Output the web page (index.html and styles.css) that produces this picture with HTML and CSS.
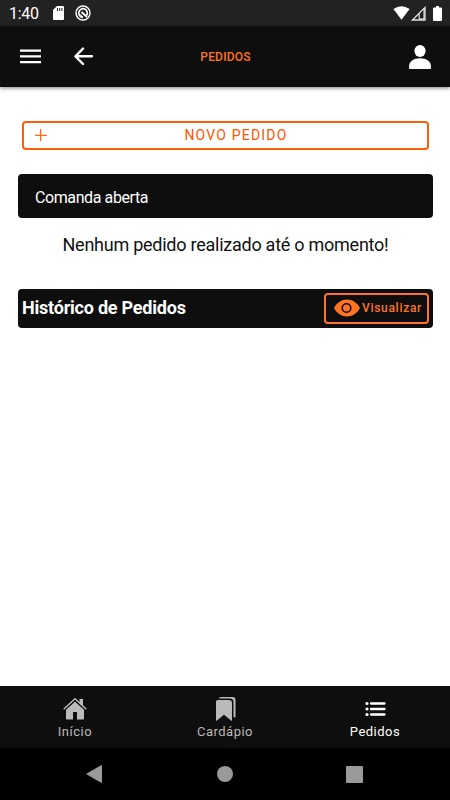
FILE: index.html
```html
<!DOCTYPE html>
<html lang="pt-BR">
<head>
<meta charset="utf-8">
<meta name="viewport" content="width=device-width, initial-scale=1">
<title>Pedidos</title>
<link rel="stylesheet" href="styles.css">
</head>
<body>
<div class="status">
  <span class="clock">1:40</span>
  <svg class="sd" width="11" height="14" viewBox="0 0 11 14"><path fill="#fff" fill-rule="evenodd" d="M4 0h6q1 0 1 1v12q0 1-1 1H1q-1 0-1-1V4zM4 2v3h1V2zM6.2 2v3h1V2zM8.4 2v3h1V2z"/></svg>
  <svg class="ring" width="16" height="16" viewBox="0 0 16 16" fill="none" stroke="#fff"><circle cx="8" cy="8" r="7" stroke-width="1.4"/><path d="M11.500 10.500A4.300 4.300 0 1 0 8 12.300" stroke-width="1.700"/><path d="M6.500 7l5.500 5" stroke-width="1.800"/><path d="M5 9.500l3 2.500" stroke-width="1"/></svg>
  <svg class="wifi" width="17" height="14" viewBox="0 0 17 14"><path fill="#fff" d="M.4 3Q8.500-2.500 16.600 3L8.500 13.700z"/></svg>
  <svg class="signal" width="15" height="15" viewBox="0 0 15 15"><path d="M1.500 14L14 1.500V14z" fill="none" stroke="#ddd" stroke-width="1.300"/><path d="M8.200 7.500L13 2.500V13H8.200z" fill="#222" stroke="#fff" stroke-width="1"/></svg>
  <svg class="battery" width="9" height="15" viewBox="0 0 9 15"><path fill="#fff" d="M3 0h3v1.500h2q1 0 1 1V14q0 1-1 1H1q-1 0-1-1V2.500q0-1 1-1h2z"/></svg>
</div>
<header class="header">
  <svg class="menu" width="21" height="15" viewBox="0 0 21 15"><path stroke="#fff" stroke-width="2.300" d="M0 1.700h21M0 7.400h21M0 13.200h21"/></svg>
  <svg class="back" width="19" height="19" viewBox="0 0 19 19"><path fill="none" stroke="#fff" stroke-width="2.400" stroke-linecap="round" stroke-linejoin="round" d="M9 1.500L1.500 9.300L9 17M2 9.300h16"/></svg>
  <h1 class="title">PEDIDOS</h1>
  <svg class="user" width="22" height="24" viewBox="0 0 22 24"><ellipse cx="11" cy="6" rx="5.600" ry="6" fill="#fff"/><path fill="#fff" d="M0 23V21.500C0 16.500 4.500 13.300 11 13.300S22 16.500 22 21.500V23q0 1-1 1H1q-1 0-1-1z"/></svg>
</header>
<main class="main">
  <button class="new">
    <svg class="plus" width="12" height="12" viewBox="0 0 12 12"><path stroke="#ff6a1a" stroke-width="1.300" d="M0 6.400h12M5.600 0v12"/></svg>
    <span>NOVO PEDIDO</span>
  </button>
  <section class="open">Comanda aberta</section>
  <p class="empty">Nenhum pedido realizado até o momento!</p>
  <section class="history">
    <h2>Histórico de Pedidos</h2>
    <button class="view">
      <svg width="26" height="18" viewBox="0 0 26 18"><path fill="#ff7422" d="M0 9C3 3.500 7.500.5 13 .5S23 3.500 26 9C23 14.500 18.500 17.500 13 17.500S3 14.500 0 9z"/><circle cx="12.500" cy="9" r="4.300" fill="#ff7422" stroke="#0e0e0e" stroke-width="1.600"/></svg>
      <span>Visualizar</span>
    </button>
  </section>
</main>
<nav class="tabs">
  <a class="tab">
    <svg width="24" height="24" viewBox="0 0 24 24"><path fill="#bababa" d="M16.500 2H20v7l-3.500-3.200z"/><path fill="none" stroke="#bababa" stroke-width="1.500" stroke-linecap="round" stroke-linejoin="round" d="M1.200 11.800L12 1.800L22.800 11.800"/><path fill="#bababa" d="M12 4.500L3 12.800v8.700q0 1 1 1h6V15h4v7.500h6q1 0 1-1v-8.700z"/><path fill="none" stroke="#0e0e0e" stroke-width=".8" d="M2 12.900L12 3.600L22 12.900"/></svg>
    <span>Início</span>
  </a>
  <a class="tab">
    <svg width="24" height="24" viewBox="0 0 24 24"><path fill="#bababa" d="M5.500 1.500Q6 0 8 0H19.500q3 0 3 3v16.500q0 1.500-2 .5V5q0-3.500-3.500-3.500z"/><path fill="#bababa" d="M4.500 3H16q3 0 3 3v17.200q0 1-1 .3l-7-5.700-7 5.700q-1 .7-1-.3V5q0-2 1.500-2z"/></svg>
    <span>Cardápio</span>
  </a>
  <a class="tab active">
    <svg width="24" height="24" viewBox="0 0 24 24"><g stroke="#fff" stroke-linecap="round"><path stroke-width="2.300" d="M8 6.500h13.500M8 12h13.500M8 17.500h13.500"/><path stroke-width="3.200" d="M4 6.500h.01M4 12h.01M4 17.500h.01"/></g></svg>
    <span>Pedidos</span>
  </a>
</nav>
<footer class="system">
  <svg width="16" height="18" viewBox="0 0 16 18"><path fill="#9a9a9a" d="M0 9L15 .3q1-.4 1 .7v16q0 1.100-1 .7z"/></svg>
  <svg width="16" height="16" viewBox="0 0 16 16"><circle cx="8" cy="8" r="8" fill="#9a9a9a"/></svg>
  <svg width="17" height="17" viewBox="0 0 17 17"><rect width="17" height="17" rx="1" fill="#9a9a9a"/></svg>
</footer>
</body>
</html>
```
FILE: styles.css
```css
* { box-sizing: border-box; }
body {
  margin: 0;
  height: 800px;
  display: flex;
  flex-direction: column;
  overflow: hidden;
  background: #fff;
  font-family: Roboto, "Liberation Sans", sans-serif;
}
svg { display: block; flex: none; }
h1, h2, p { margin: 0; }
button { background: none; font-family: inherit; }
.status {
  height: 26px;
  flex: none;
  display: flex;
  align-items: center;
  padding: 0 8px 0 9px;
  background: #222;
  color: #fff;
}
.clock { width: 44px; font-size: 16px; line-height: 26px; padding-top: 2px; letter-spacing: -.3px; }
.ring { margin-left: 11px; }
.wifi { margin-left: auto; }
.signal { margin-left: 1px; }
.battery { margin-left: 7px; }
.header {
  height: 61px;
  flex: none;
  display: grid;
  grid-template-columns: 54px 60px 1fr 92px 22px;
  align-items: center;
  padding: 0 19px 0 20px;
  background: #0e0e0e;
  box-shadow: 0 1px 4px rgba(0, 0, 0, .5);
}
.title {
  justify-self: center;
  text-align: center;
  color: #ff7422;
  font-size: 12px;
  font-weight: 500;
  line-height: 16px;
  letter-spacing: .2px;
}
.user { grid-column: 5; }
.main { flex: 1; padding: 34px 17px 0 18px; }
.new {
  display: grid;
  grid-template-columns: 12px 1fr;
  align-items: center;
  width: 407px;
  height: 29px;
  margin: 0 0 0 4px;
  padding: 0 2px 1px 11px;
  border: 2px solid #ff5e08;
  border-radius: 4px;
  color: #ff5400;
  font-size: 14px;
  font-weight: 400;
  letter-spacing: 1.200px;
}
.open {
  height: 44px;
  margin-top: 24px;
  padding-left: 17px;
  border-radius: 4px;
  background: #0e0e0e;
  color: #fff;
  font-size: 16px;
  line-height: 47px;
  letter-spacing: -.4px;
}
.empty {
  margin-top: 15px;
  text-align: center;
  color: #111;
  font-size: 18px;
  line-height: 24px;
  letter-spacing: -.25px;
}
.history {
  height: 39px;
  margin-top: 32px;
  display: flex;
  align-items: center;
  justify-content: space-between;
  padding: 0 4px;
  border-radius: 4px;
  background: #0e0e0e;
}
.history h2 {
  padding-bottom: 2px;
  color: #fff;
  font-size: 18px;
  font-weight: 700;
  line-height: 24px;
  letter-spacing: -.22px;
}
.view {
  width: 105px;
  height: 31px;
  display: flex;
  align-items: center;
  gap: 2px;
  padding: 0 0 1px 8px;
  border: 2px solid #ff7422;
  border-radius: 4px;
  color: #ff7422;
  font-size: 12px;
  font-weight: 500;
  letter-spacing: .7px;
}
.tabs {
  height: 62px;
  flex: none;
  display: grid;
  grid-template-columns: repeat(3, 1fr);
  background: #0e0e0e;
}
.tab {
  display: flex;
  flex-direction: column;
  align-items: center;
  padding-top: 11px;
  color: #bababa;
  font-size: 13px;
  line-height: 21px;
  letter-spacing: .5px;
}
.active { color: #fff; }
.system {
  height: 52px;
  flex: none;
  display: grid;
  grid-template-columns: 131px 129px 1fr;
  align-items: center;
  padding: 0 86px;
  background: #000;
}
```
